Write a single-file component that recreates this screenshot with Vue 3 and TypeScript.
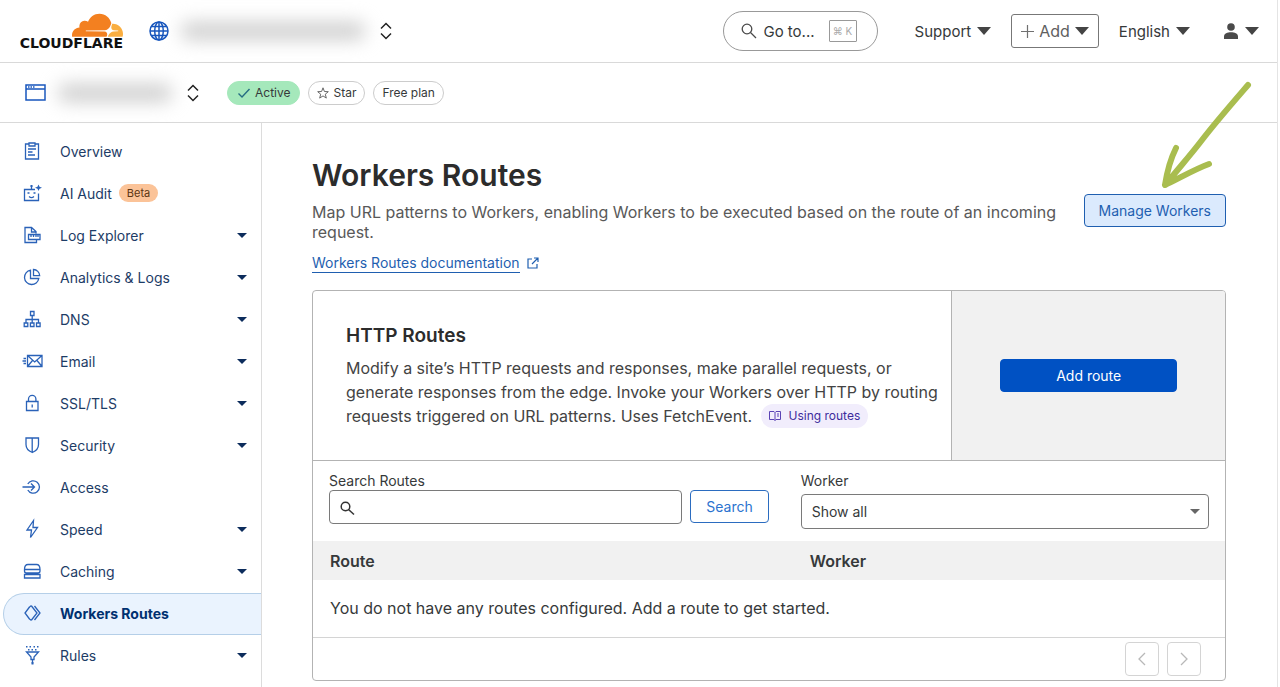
<script setup lang="ts">
import { ref } from 'vue'

interface NavItem {
  label: string
  icon: string
  solid?: string
  badge?: string
  expandable?: boolean
  active?: boolean
}

const navItems: NavItem[] = [
  { label: 'Overview', icon: 'M6.500 3H3.500v15h13v-15H13.500M7 2h6v3H7zM6 8h8M6 11h4.500M6 14h7' },
  {
    label: 'AI Audit',
    icon: 'M13 6.500H2.500v11h14v-7M9.500 6.500V2.500M5.500 10h2M11.500 10h2M7 13.500c1.500 1.300 3.500 1.300 5 0',
    solid: 'M16.500 1.500l1 2.200 2.500 1-2.500 1-1 2.300-1-2.300-2.500-1 2.500-1zM8.500 2h2v2h-2z',
    badge: 'Beta',
  },
  {
    label: 'Log Explorer',
    icon: 'M14 8.500V6.500L9.500 2.500H3v15h11.500V15M9.500 2.500V7H14M6.500 9.500H18v5H6.500zM9 9.500V12M11.500 9.500V12M14 9.500V12M16 9.500V12',
    expandable: true,
  },
  {
    label: 'Analytics & Logs',
    icon: 'M8.500 3.200a7.200 7.200 0 1 0 8.300 8.300H8.500zM11.500 2.500v6.200h6.200a6.500 6.500 0 0 0-6.200-6.200z',
    expandable: true,
  },
  {
    label: 'DNS',
    icon: 'M8.500 2.500h3.500v4H8.500zM10.200 6.500v7.500M4 13.500v-3h12.500v3M2.200 14h3.600v3.500H2.200zM8.400 14h3.600v3.500H8.400zM14.500 14h3.600v3.500h-3.600z',
    expandable: true,
  },
  {
    label: 'Email',
    icon: 'M5.500 4.500h14.500v11H5.500zM5.500 4.500l7.200 6.500 7.300-6.500M5.500 15.500l5-6M20 15.500l-5-6M1.500 7.500H4M.5 10H4M1.500 12.500H4',
    expandable: true,
  },
  {
    label: 'SSL/TLS',
    icon: 'M4.500 8.500h11.500v9H4.500zM6.500 8.500V6a3.700 3.700 0 0 1 7.400 0v2.500M10.200 11.500v3',
    expandable: true,
  },
  {
    label: 'Security',
    icon: 'M4 3h12.500v6.500c0 4-2.500 6.500-6.200 8C6.500 16 4 13.500 4 9.500zM10.200 3v14.500',
    expandable: true,
  },
  {
    label: 'Access',
    icon: 'M5.800 7a6.200 6.200 0 1 1 0 6M.5 10H12.500M9 6.500l3.500 3.500L9 13.500',
  },
  { label: 'Speed', icon: 'M11.500 1.500L5 11h4.500L8.500 18.500 15.500 8.500H11z', expandable: true },
  {
    label: 'Caching',
    icon: 'M2.500 8.500C2.500 5 4 3.500 6 3.500h8.500c2 0 3.500 1.500 3.500 5zM2.500 8.500v1.500c0 1.500 1 2 2 2H16c1 0 2-.5 2-2V8.500M2.500 13.500H18V17H2.500z',
    expandable: true,
  },
  {
    label: 'Workers Routes',
    icon: 'M7.500 4L3 10l4.500 6M9.500 3l5.500 7-5.500 7M12.500 3l5.500 7-5.500 7M7.500 4l2-1.500M7.500 16l2 1.500',
    active: true,
  },
  {
    label: 'Rules',
    icon: 'M4.500 7h12l-4.500 5v2.500H9V12zM10.500 14.500V19',
    solid: 'M4 1h1.500v1.500H4zM7.500 1H9v1.500H7.500zM11.500 1H13v1.500h-1.500zM15 1h1.500v1.500H15zM6 4h1.500v1.500H6zM9.500 4H11v1.500H9.500zM13 4h1.500v1.500H13zM9.500 17h2v2.500h-2z',
    expandable: true,
  },
]

const query = ref('')
const worker = ref('all')
</script>

<template>
  <div class="app">
    <header class="topbar">
      <a class="logo" href="#" aria-label="Cloudflare home">
        <svg class="cloud" viewBox="0 6.400 24 11.050" aria-hidden="true">
          <path fill="#f38020" d="M16.5088 16.8447c.1475-.5068.0908-.9707-.1553-1.3154-.2246-.3164-.6045-.499-1.0615-.5205l-8.6592-.1123a.1559.1559 0 0 1-.1333-.0713c-.0283-.042-.0351-.0986-.021-.1553.0278-.084.1123-.1484.2036-.1562l8.7359-.1123c1.0351-.0489 2.1601-.8868 2.5537-1.9136l.499-1.3013c.0215-.0561.0293-.1128.0147-.168-.5625-2.5463-2.835-4.4453-5.5499-4.4453-2.5039 0-4.6284 1.6177-5.3876 3.8614-.4927-.3658-1.1187-.5625-1.794-.499-1.2026.119-2.1665 1.083-2.2861 2.2856-.0283.31-.0069.6128.0635.894C1.5683 13.171 0 14.7754 0 16.752c0 .1748.0142.3515.0352.5273.0141.083.0844.1475.1689.1475h15.9814c.0909 0 .1758-.0645.2032-.1553z" />
          <path fill="#faae40" d="M19.2656 11.2813c-.0771 0-.1611 0-.2383.0112-.0566 0-.1054.0415-.127.0976l-.3378 1.1744c-.1475.5068-.0918.9707.1543 1.3164.2256.3164.6055.498 1.0625.5195l1.8437.1133c.0557 0 .1055.0263.1329.0703.0283.043.0351.1074.0214.1562-.0283.084-.1132.1485-.204.1553l-1.921.1123c-1.041.0488-2.1582.8867-2.5527 1.914l-.1406.3585c-.0283.0713.0215.1416.0986.1416h6.5977c.0771 0 .1474-.0489.169-.126.1122-.4082.1757-.837.1757-1.2803 0-2.6025-2.125-4.727-4.7344-4.727" />
        </svg>
        <span class="wordmark">CLOUDFLARE</span>
      </a>

      <button class="switcher account" type="button" aria-label="Switch account">
        <svg width="20" height="20" viewBox="0 0 20 20" fill="none" stroke="#1756bd" stroke-width="1.500" aria-hidden="true">
          <circle cx="10" cy="10" r="9" />
          <ellipse cx="10" cy="10" rx="4.300" ry="9" />
          <path d="M10 1v18M1 10h18M2.500 5.500h15M2.500 14.500h15" />
        </svg>
        <span class="redacted wide"></span>
        <svg class="updown" width="12" height="16" viewBox="0 0 12 16" aria-hidden="true"><path d="M1 5.500l5-5 5 5M1 10.500l5 5 5-5" /></svg>
      </button>

      <button class="goto" type="button">
        <svg width="16" height="16" viewBox="0 0 16 16" fill="none" stroke="#4a4a4a" stroke-width="1.300" aria-hidden="true">
          <circle cx="6" cy="6" r="4.800" /><path d="M9.500 9.500l5.500 5.500" />
        </svg>
        <span>Go to...</span>
        <kbd>⌘ K</kbd>
      </button>

      <nav class="tools" aria-label="Account">
        <button class="menu" type="button">Support <i class="caret"></i></button>
        <button class="menu add" type="button">
          <svg width="13" height="13" viewBox="0 0 13 13" stroke="#707070" stroke-width="1.200" aria-hidden="true"><path d="M6.500 0v13M0 6.500h13" /></svg>
          Add <i class="caret"></i>
        </button>
        <button class="menu" type="button">English <i class="caret"></i></button>
        <button class="menu user" type="button" aria-label="User menu">
          <svg width="16" height="16" viewBox="0 0 16 16" fill="#4a4a4a" aria-hidden="true"><circle cx="8" cy="4" r="3.800" /><path d="M1 16v-2.500C1 10.500 4.500 9.300 8 9.300s7 1.200 7 4.200V16z" /></svg>
          <i class="caret"></i>
        </button>
      </nav>
    </header>

    <div class="subbar">
      <button class="switcher" type="button" aria-label="Switch site">
        <svg width="21" height="17" viewBox="0 0 21 17" fill="none" stroke="#1756bd" stroke-width="1.500" aria-hidden="true">
          <path d="M1 1h19v15H1zM1 5h19" /><path stroke-dasharray="1.500 1" d="M3 3h6.500" />
        </svg>
        <span class="redacted"></span>
        <svg class="updown" width="12" height="16" viewBox="0 0 12 16" aria-hidden="true"><path d="M1 5.500l5-5 5 5M1 10.500l5 5 5-5" /></svg>
      </button>
      <div class="pills">
        <span class="pill ok">
          <svg width="14" height="12" viewBox="0 0 14 12" fill="none" stroke="#266d83" stroke-width="1.400" aria-hidden="true"><path d="M1.500 6.500l3.500 3.500 7.500-8" /></svg>
          Active
        </span>
        <button class="pill" type="button">
          <svg width="12" height="12" viewBox="0 0 12 12" fill="none" stroke="#666" aria-hidden="true"><path d="M6 .8l1.400 3.700 3.900.2-3 2.500 1 3.900L6 8.900l-3.300 2.200 1-3.900-3-2.500 3.900-.2z" /></svg>
          Star
        </button>
        <span class="pill">Free plan</span>
      </div>
    </div>

    <div class="body">
      <nav class="sidebar" aria-label="Site">
        <a v-for="item in navItems" :key="item.label" class="nav-item" :class="{ active: item.active }" href="#" :aria-current="item.active ? 'page' : undefined">
          <svg class="nav-icon" viewBox="0 0 20 20" aria-hidden="true">
            <path :d="item.icon" />
            <path v-if="item.solid" class="solid" :d="item.solid" />
          </svg>
          <span>{{ item.label }}</span>
          <span v-if="item.badge" class="badge">{{ item.badge }}</span>
          <i v-if="item.expandable" class="expand"></i>
        </a>
      </nav>

      <main class="main">
        <div class="page-head">
          <div>
            <h1>Workers Routes</h1>
            <p>Map URL patterns to Workers, enabling Workers to be executed based on the route of an incoming request.</p>
            <a class="doc" href="#">
              <span>Workers Routes documentation</span>
              <svg width="12" height="12" viewBox="0 0 12 12" fill="none" stroke="#1f5fb0" stroke-width="1.200" aria-hidden="true"><path d="M5 2H1v9h9V7M7 1h4v4M11 1L5 7" /></svg>
            </a>
          </div>
          <div class="manage-wrap">
            <button class="btn manage" type="button">Manage Workers</button>
            <svg class="arrow" width="92" height="110" viewBox="0 0 92 110" aria-hidden="true">
              <path d="M87 4C68 26 54 42 41 59S16 89 6 102M15 67C9 79 6 91 4 104M48 83C34 88 17 98 4 104" />
            </svg>
          </div>
        </div>

        <section class="card">
          <div class="intro">
            <div class="intro-text">
              <h2>HTTP Routes</h2>
              <p>
                Modify a site’s HTTP requests and responses, make parallel requests, or generate responses from the edge. Invoke your Workers over HTTP by routing requests triggered on URL patterns. Uses FetchEvent.
                <a class="using" href="#">
                  <svg width="12" height="10" viewBox="0 0 12 10" fill="none" stroke="#5a43b5" aria-hidden="true"><path d="M.5.5h4.500L6 1.500l1-1h4.500v8H7l-1 1-1-1H.5zM6 1.500v8M8 3h2M8 5h2" /></svg>
                  Using routes
                </a>
              </p>
            </div>
            <div class="intro-action">
              <button class="btn primary" type="button">Add route</button>
            </div>
          </div>

          <div class="filters">
            <form class="search" @submit.prevent>
              <label for="route-search">Search Routes</label>
              <div class="search-row">
                <div class="field">
                  <svg width="15" height="15" viewBox="0 0 15 15" fill="none" stroke="#333" stroke-width="1.500" aria-hidden="true"><circle cx="5.500" cy="5.500" r="4.300" /><path d="M8.500 8.500l5.500 5" /></svg>
                  <input id="route-search" v-model="query" type="text" />
                </div>
                <button class="btn outline" type="submit">Search</button>
              </div>
            </form>
            <div class="worker">
              <label for="worker-filter">Worker</label>
              <div class="select">
                <select id="worker-filter" v-model="worker"><option value="all">Show all</option></select>
                <i class="select-caret"></i>
              </div>
            </div>
          </div>

          <table>
            <thead>
              <tr><th class="route-col" scope="col">Route</th><th scope="col">Worker</th></tr>
            </thead>
            <tbody>
              <tr><td colspan="2">You do not have any routes configured. Add a route to get started.</td></tr>
            </tbody>
          </table>

          <div class="pager">
            <button type="button" disabled aria-label="Previous page"><svg width="8" height="14" viewBox="0 0 8 14" aria-hidden="true"><path d="M7 1L1 7l6 6" /></svg></button>
            <button type="button" disabled aria-label="Next page"><svg width="8" height="14" viewBox="0 0 8 14" aria-hidden="true"><path d="M1 1l6 6-6 6" /></svg></button>
          </div>
        </section>
      </main>
    </div>
  </div>
</template>

<style>
body {
  margin: 0;
  background: #fff;
}
html {
  overflow: hidden;
}
</style>

<style scoped>
.app,
.app * {
  box-sizing: border-box;
}
.app {
  min-height: 100vh;
  margin-right: 2px;
  border-right: 1px solid #e4e4e4;
  display: flex;
  flex-direction: column;
  font-family: Inter, 'Liberation Sans', sans-serif;
  font-size: 14px;
  color: #36393a;
}
button,
input,
select {
  font: inherit;
  color: inherit;
  margin: 0;
}
button {
  background: none;
  border: 0;
  padding: 0;
}
svg {
  flex: none;
}
a {
  text-decoration: none;
}

.topbar {
  display: flex;
  align-items: center;
  height: 63px;
  padding: 0 18px 0 16px;
  border-bottom: 1px solid #d9d9d9;
}
.logo {
  display: flex;
  flex-direction: column;
  align-items: flex-end;
  width: 107px;
  color: #111;
}
.cloud {
  width: 51px;
  height: 24px;
}
.wordmark {
  font: 700 14px/12px 'DejaVu Sans', sans-serif;
}
.switcher {
  display: flex;
  align-items: center;
}
.account {
  margin-left: 26px;
}
.redacted {
  width: 114px;
  height: 18px;
  margin: 0 15px 0 12px;
  border-radius: 8px;
  background: #cfcfcf;
  filter: blur(9px);
}
.redacted.wide {
  width: 184px;
}
.updown {
  fill: none;
  stroke: #222;
  stroke-width: 1.5;
  overflow: visible;
}
.goto {
  display: flex;
  align-items: center;
  gap: 6px;
  height: 40px;
  padding: 0 20px 0 17px;
  margin-left: auto;
  border: 1px solid #999;
  border-radius: 20px;
  font-size: 15px;
}
.goto kbd {
  width: 28px;
  margin-left: 8px;
  border: 1px solid #999;
  border-radius: 1px;
  font: 10px/20px Inter, 'DejaVu Sans', sans-serif;
  color: #aaa;
}
.tools {
  display: flex;
  align-items: center;
  gap: 20px;
  margin-left: 37px;
}
.menu {
  display: flex;
  align-items: center;
  gap: 6px;
  font-size: 15px;
}
.add {
  height: 34px;
  padding: 0 9px;
  gap: 5px;
  border: 1px solid #777;
  border-radius: 3px;
  font-size: 16px;
  color: #606060;
}
.user {
  margin-left: 13px;
}
.caret {
  border: 7px solid transparent;
  border-top: 8px solid #444;
  border-bottom: 0;
}

.subbar {
  display: flex;
  align-items: center;
  gap: 28px;
  height: 60px;
  padding-left: 25px;
  border-bottom: 1px solid #d9d9d9;
}
.pills {
  display: flex;
  gap: 8px;
}
.pill {
  display: flex;
  align-items: center;
  gap: 4px;
  height: 24px;
  padding: 0 8px;
  border: 1px solid #ccc;
  border-radius: 12px;
  font-size: 12px;
}
.pill.ok {
  padding: 0 9px;
  border-color: #a5e8bb;
  background: #a5e8bb;
}

.body {
  display: flex;
  flex: 1;
}
.sidebar {
  width: 262px;
  flex: none;
  padding-top: 8px;
  border-right: 1px solid #dcdcdc;
}
.nav-item {
  display: flex;
  align-items: center;
  height: 42px;
  margin-left: 3px;
  padding: 0 14px 2px 18px;
  border: 1px solid transparent;
  border-right: 0;
  border-radius: 21px 0 0 21px;
  color: #1d3c66;
}
.nav-item.active {
  border-color: #b5cfe8;
  background: #eaf3fe;
  color: #003070;
  font-weight: 700;
}
.nav-icon {
  width: 20px;
  height: 20px;
  margin-right: 18px;
  overflow: visible;
  fill: none;
  stroke: #2a62b8;
  stroke-width: 1.3;
}
.solid {
  fill: #2a62b8;
  stroke: none;
}
.badge {
  margin-left: 7px;
  padding: 0 8px;
  border-radius: 9px;
  background: #fbc398;
  color: #5c3512;
  font-size: 11px;
  line-height: 18px;
}
.expand {
  margin-left: auto;
  border: 5px solid transparent;
  border-top-color: #0c2c5c;
  border-bottom: 0;
}

.main {
  flex: 1;
  min-width: 0;
  padding: 25px 51px 7px 50px;
}
.page-head {
  display: flex;
  align-items: center;
  justify-content: space-between;
  gap: 16px;
  margin-bottom: 17px;
}
h1,
h2,
p {
  margin: 0;
}
h1 {
  font-size: 30px;
  line-height: 54px;
  font-weight: 600;
  color: #2c2c2c;
}
.page-head p {
  font-size: 16px;
  line-height: 20px;
  color: #595959;
}
.doc {
  display: flex;
  align-items: center;
  gap: 7px;
  height: 20px;
  margin-top: 11px;
  color: #1f5fb0;
  line-height: 18px;
}
.doc span {
  border-bottom: 1px solid #1f5fb0;
}
.manage-wrap {
  position: relative;
  flex: none;
}
.arrow {
  position: absolute;
  right: -27px;
  bottom: 36px;
  fill: none;
  stroke: #a9bd4f;
  stroke-width: 6;
  stroke-linecap: round;
  stroke-linejoin: round;
  pointer-events: none;
}
.btn {
  height: 33px;
  padding: 0 15px;
  border: 1px solid #1f5fb0;
  border-radius: 4px;
  font-size: 14px;
}
.manage {
  padding: 0 14px;
  background: #dbeafd;
  color: #1f5fb0;
}
.primary {
  width: 100%;
  border-color: #0051c3;
  background: #0051c3;
  color: #fff;
}
.outline {
  color: #2b73cf;
  border-color: #2b6cc0;
}

.card {
  border: 1px solid #b3b3b3;
  border-radius: 4px;
  overflow: hidden;
}
.intro {
  display: flex;
  border-bottom: 1px solid #b3b3b3;
}
.intro-text {
  flex: 1;
  padding: 33px 8px 32px 33px;
}
h2 {
  margin-bottom: 8px;
  font-size: 19px;
  line-height: 24px;
  font-weight: 600;
  color: #2c2c2c;
}
.intro-text p {
  font-size: 16px;
  line-height: 24px;
  color: #434343;
}
.using {
  display: inline-flex;
  align-items: center;
  gap: 8px;
  height: 24px;
  margin-left: 4px;
  padding: 0 8px;
  border-radius: 12px;
  background: #f1edfc;
  color: #3d2c9c;
  font-size: 12px;
  vertical-align: top;
}
.intro-action {
  display: flex;
  align-items: center;
  flex: 0 0 30%;
  padding: 0 48px;
  border-left: 1px solid #b3b3b3;
  background: #f1f1f1;
}

.filters {
  display: grid;
  grid-template-columns: 14fr 13fr;
  gap: 32px;
  padding: 10px 16px 12px;
}
label {
  display: block;
  font-size: 14px;
  line-height: 19px;
}
.search-row {
  display: flex;
  gap: 8px;
}
.field {
  display: flex;
  align-items: center;
  flex: 1;
  gap: 8px;
  height: 34px;
  padding: 2px 10px 0;
  border: 1px solid #7a7a7a;
  border-radius: 4px;
}
.field input {
  flex: 1;
  min-width: 0;
  border: 0;
  outline: 0;
  background: none;
}
.select {
  display: flex;
  align-items: center;
  margin-top: 4px;
  padding-right: 8px;
  border: 1px solid #7a7a7a;
  border-radius: 4px;
}
.select select {
  flex: 1;
  height: 33px;
  padding: 0 10px;
  border: 0;
  appearance: none;
  background: none;
}
.select-caret {
  border: 5px solid transparent;
  border-top-color: #666;
  border-bottom: 0;
}

table {
  width: 100%;
  border-collapse: collapse;
  table-layout: fixed;
  font-size: 16px;
}
th {
  height: 39px;
  padding: 0 17px;
  background: #f1f1f1;
  text-align: left;
  font-weight: 600;
}
.route-col {
  width: 52.6%;
}
td {
  height: 57px;
  padding: 0 17px;
  border-bottom: 1px solid #d4d4d4;
}
.pager {
  display: flex;
  justify-content: flex-end;
  gap: 8px;
  padding: 4px 24px;
}
.pager button {
  display: flex;
  align-items: center;
  justify-content: center;
  width: 34px;
  height: 34px;
  border: 1px solid #d4d4d4;
  border-radius: 4px;
}
.pager path {
  fill: none;
  stroke: #b8b8b8;
  stroke-width: 1.3;
}
</style>
